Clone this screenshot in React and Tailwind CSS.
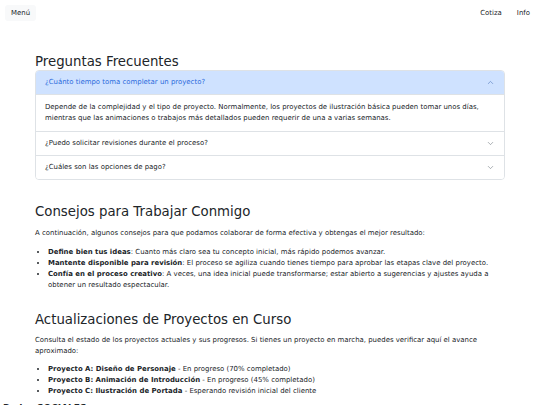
import React, { useState } from "react";
import { ChevronDown, ChevronUp } from "lucide-react";

const faqs = [
  {
    q: "¿Cuánto tiempo toma completar un proyecto?",
    a: "Depende de la complejidad y el tipo de proyecto. Normalmente, los proyectos de ilustración básica pueden tomar unos días, mientras que las animaciones o trabajos más detallados pueden requerir de una a varias semanas.",
  },
  {
    q: "¿Puedo solicitar revisiones durante el proceso?",
    a: "Sí, cada proyecto incluye rondas de revisión para ajustar los detalles hasta que estés satisfecho.",
  },
  {
    q: "¿Cuáles son las opciones de pago?",
    a: "Se acepta transferencia bancaria y pagos en línea. Normalmente se solicita un anticipo del 50%.",
  },
];

const tips = [
  ["Define bien tus ideas", "Cuanto más claro sea tu concepto inicial, más rápido podemos avanzar."],
  ["Mantente disponible para revisión", "El proceso se agiliza cuando tienes tiempo para aprobar las etapas clave del proyecto."],
  ["Confía en el proceso creativo", "A veces, una idea inicial puede transformarse; estar abierto a sugerencias y ajustes ayuda a obtener un resultado espectacular."],
];

const projects = [
  ["Proyecto A: Diseño de Personaje", "En progreso (70% completado)"],
  ["Proyecto B: Animación de Introducción", "En progreso (45% completado)"],
  ["Proyecto C: Ilustración de Portada", "Esperando revisión inicial del cliente"],
];

function Faq() {
  const [open, setOpen] = useState(0);
  return (
    <div className="border border-[#dee2e6] rounded-[4px] overflow-hidden">
      {faqs.map((f, i) => {
        const active = open === i;
        return (
          <div key={i} className={i > 0 ? "border-t border-[#dee2e6]" : ""}>
            <button
              onClick={() => setOpen(active ? -1 : i)}
              className={`w-full flex items-center justify-between px-[9px] py-[6px] text-left ${active ? "bg-[#cfe2ff] text-[#2c6bdc] border-b border-[#dee2e6]" : "bg-white text-[#212529]"}`}
            >
              <span>{f.q}</span>
              {active ? (
                <ChevronUp className="w-[9px] h-[9px] text-[#4a72b8]" strokeWidth={1.5} />
              ) : (
                <ChevronDown className="w-[9px] h-[9px] text-[#6c757d]" strokeWidth={1.5} />
              )}
            </button>
            {active && <div className="px-[9px] py-[7px]">{f.a}</div>}
          </div>
        );
      })}
    </div>
  );
}

function Heading({ children, className = "" }) {
  return <h2 className={`text-[13.3px] leading-[16px] text-[#212529] ${className}`}>{children}</h2>;
}

export default function App() {
  return (
    <div className="min-h-screen bg-white text-[#212529] text-[6.95px] leading-[11px] font-['DejaVu_Sans',sans-serif]">
      <nav className="flex items-center justify-between pl-[5px] pr-[10px] pt-[5px]">
        <button className="bg-[#f8f9fa] rounded-[3px] px-[6px] py-[3px] leading-[10px]">Menú</button>
        <div className="flex gap-[15px] pt-[1px]">
          <a>Cotiza</a>
          <a>Info</a>
        </div>
      </nav>

      <main className="w-[470px] mx-auto mt-[33px]">
        <section>
          <Heading>Preguntas Frecuentes</Heading>
          <Faq />
        </section>

        <section className="mt-[24px]">
          <Heading className="mb-[8px]">Consejos para Trabajar Conmigo</Heading>
          <p className="mb-[8px]">A continuación, algunos consejos para que podamos colaborar de forma efectiva y obtengas el mejor resultado:</p>
          <ul className="list-disc pl-[13px] mb-[7px]">
            {tips.map(([b, t]) => (
              <li key={b}>
                <strong className="font-bold">{b}</strong>: {t}
              </li>
            ))}
          </ul>
        </section>

        <section className="mt-[21px]">
          <Heading className="mb-[7px]">Actualizaciones de Proyectos en Curso</Heading>
          <p className="mb-[7px]">Consulta el estado de los proyectos actuales y sus progresos. Si tienes un proyecto en marcha, puedes verificar aquí el avance aproximado:</p>
          <ul className="list-disc pl-[13px] mb-[5px]">
            {projects.map(([b, t]) => (
              <li key={b}>
                <strong className="font-bold">{b}</strong> - {t}
              </li>
            ))}
          </ul>
        </section>
      </main>

      <footer className="px-[3px] pb-[20px]">
        <h3 className="text-[9px] font-bold leading-[12px]">Redes SOCIALES</h3>
      </footer>
    </div>
  );
}
